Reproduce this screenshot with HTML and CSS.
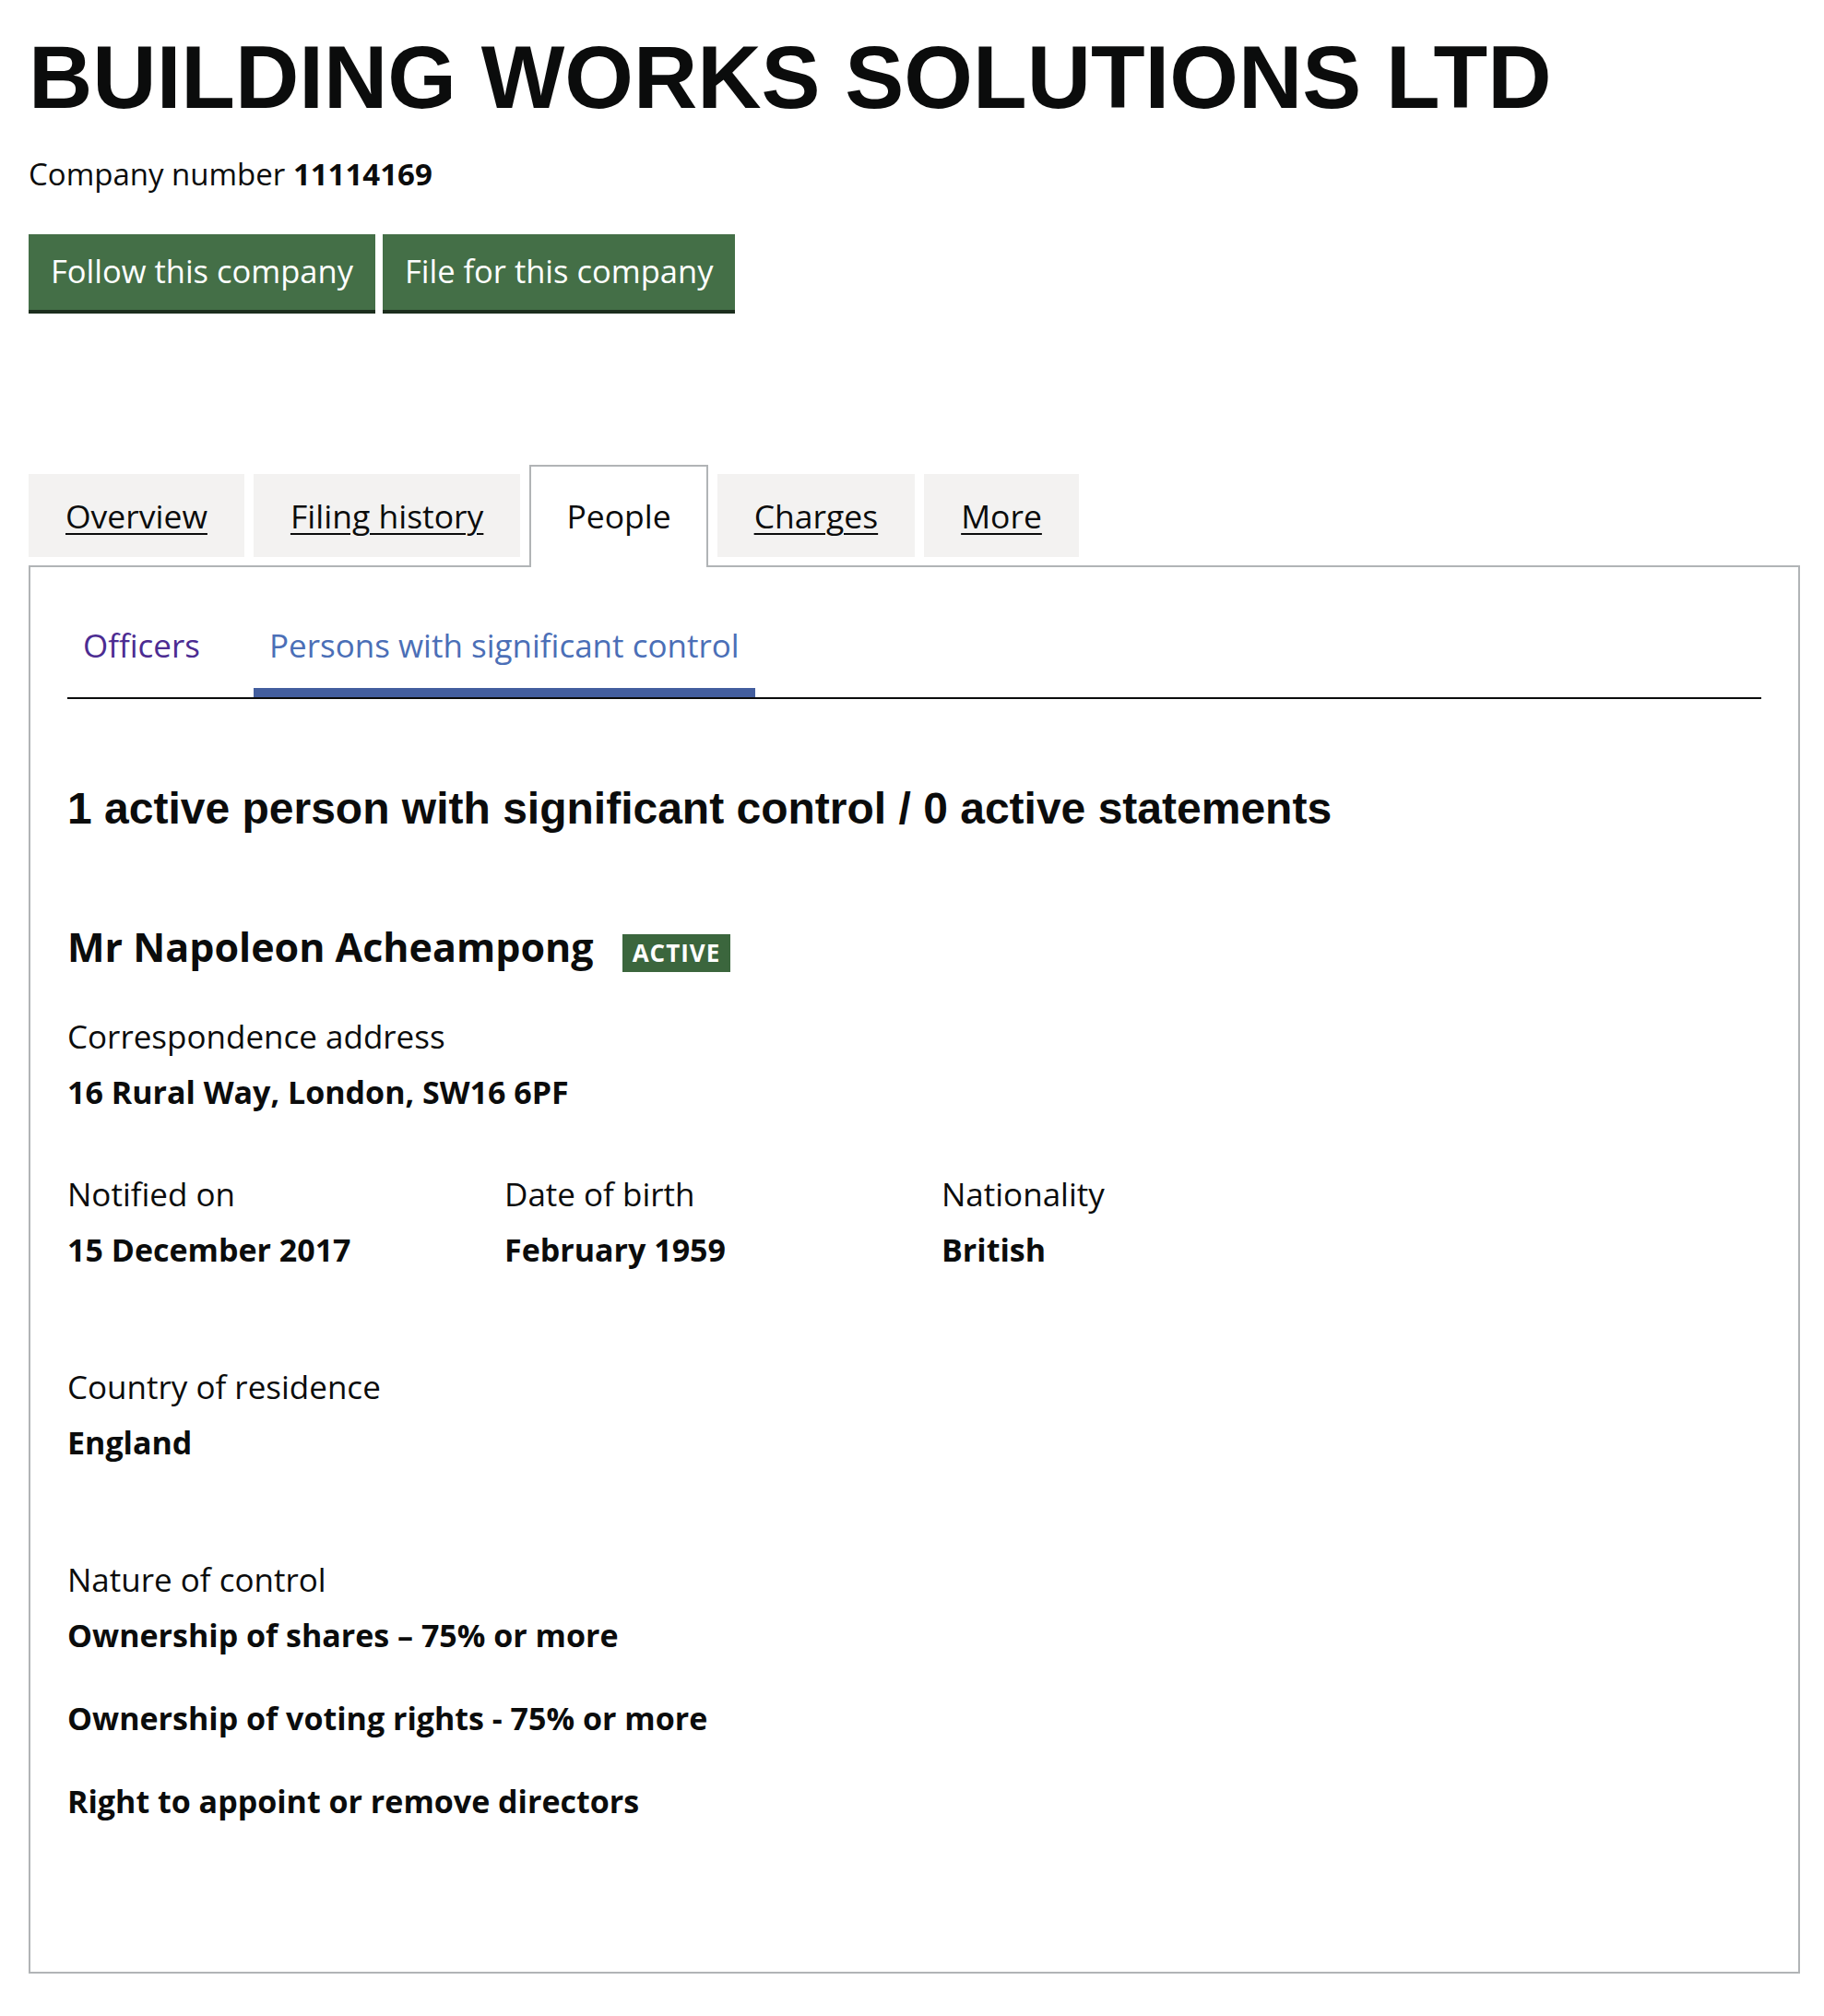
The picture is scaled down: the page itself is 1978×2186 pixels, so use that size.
FILE: index.html
```html
<!DOCTYPE html>
<html lang="en">
<head>
  <meta charset="UTF-8" />
  <meta name="viewport" content="width=device-width, initial-scale=1.0"/>
  <title>BUILDING WORKS SOLUTIONS LTD - People</title>
  <link rel="stylesheet" href="styles.css">
</head>
<body>

  <div class="page">
    <!-- Company header -->
    <h1 class="company-name">BUILDING WORKS SOLUTIONS LTD</h1>
    <p class="company-number">Company number <strong>11114169</strong></p>

    <div class="actions">
      <a href="#" class="btn">Follow this company</a>
      <a href="#" class="btn">File for this company</a>
    </div>

    <!-- Main tabs -->
    <ul class="tabs">
      <li class="tab"><a href="#">Overview</a></li>
      <li class="tab"><a href="#">Filing history</a></li>
      <li class="tab tab-active"><span>People</span></li>
      <li class="tab"><a href="#">Charges</a></li>
      <li class="tab"><a href="#">More</a></li>
    </ul>

    <div class="panel">
      <!-- People sub navigation -->
      <ul class="subnav">
        <li class="subnav-item"><a href="#">Officers</a></li>
        <li class="subnav-item subnav-active"><a href="#">Persons with significant control</a></li>
      </ul>

      <h2 class="psc-heading">1 active person with significant control / 0 active statements</h2>

      <div class="person">
        <div class="person-title">
          <h3 class="person-name">Mr Napoleon Acheampong</h3>
          <span class="tag">Active</span>
        </div>

        <dl class="field">
          <dt>Correspondence address</dt>
          <dd>16 Rural Way, London, SW16 6PF</dd>
        </dl>

        <div class="field-row">
          <dl>
            <dt>Notified on</dt>
            <dd>15 December 2017</dd>
          </dl>
          <dl>
            <dt>Date of birth</dt>
            <dd>February 1959</dd>
          </dl>
          <dl>
            <dt>Nationality</dt>
            <dd>British</dd>
          </dl>
        </div>

        <dl class="field field-spaced">
          <dt>Country of residence</dt>
          <dd>England</dd>
        </dl>

        <dl class="field field-spaced">
          <dt>Nature of control</dt>
          <dd>Ownership of shares – 75% or more</dd>
          <dd class="control">Ownership of voting rights - 75% or more</dd>
          <dd class="control">Right to appoint or remove directors</dd>
        </dl>
      </div>
    </div>
  </div>

</body>
</html>
```

FILE: styles.css
```css
body {
  margin: 0;
  font-family: "Open Sans", "Noto Sans", sans-serif;
  font-size: 35px;
  line-height: 50px;
  color: #0b0c0c;
  background: #fff;
}

.page {
  padding: 34px 26px 0 31px;
}

.company-name {
  margin: 0;
  font-family: "Liberation Sans", Arial, sans-serif;
  font-size: 96px;
  line-height: 100px;
  font-weight: 700;
}

.company-number {
  margin: 30px 0 0;
  font-size: 33px;
}

.company-number strong {
  font-weight: 700;
}

.actions {
  display: flex;
  gap: 8px;
  margin-top: 40px;
}

.btn {
  display: inline-block;
  padding: 18px 24px 20px;
  font-size: 34.5px;
  line-height: 44px;
  background: #446f47;
  color: #fff;
  text-decoration: none;
  box-shadow: 0 4px 0 #1c2e1d;
}

/* main tabs */
.tabs {
  display: flex;
  align-items: flex-start;
  list-style: none;
  margin: 178px 0 0;
  padding: 0;
  font-size: 35.5px;
}

.tab {
  margin-right: 10px;
  padding: 20px 40px;
  background: #f3f2f1;
}

.tab a {
  color: #0b0c0c;
  text-decoration: underline;
  text-decoration-thickness: 2px;
  text-underline-offset: 5px;
}

.tab-active {
  position: relative;
  z-index: 1;
  margin-top: -10px;
  margin-bottom: -2px;
  padding: 28px 38px 31px;
  border: 2px solid #b1b4b6;
  border-bottom: 0;
  background: #fff;
}

.panel {
  border: 2px solid #b1b4b6;
  padding: 60px 40px 160px;
}

/* sub navigation */
.subnav {
  display: flex;
  list-style: none;
  margin: 0;
  padding: 0;
  border-bottom: 2px solid #0b0c0c;
}

.subnav-item {
  margin-right: 41px;
  padding: 0 17px 21px;
  border-bottom: 10px solid transparent;
}

.subnav-item a {
  color: #4c2c92;
  text-decoration: none;
}

.subnav-active {
  border-bottom-color: #435e9e;
}

.subnav-active a {
  color: #4b6fb7;
}

.psc-heading {
  margin: 94px 0 0;
  font-family: "Liberation Sans", Arial, sans-serif;
  font-size: 48px;
  line-height: 50px;
  font-weight: 700;
}

/* person */
.person-title {
  display: flex;
  align-items: baseline;
  margin-top: 100px;
}

.person-name {
  margin: 0;
  font-size: 43px;
  line-height: 50px;
  font-weight: 700;
}

.tag {
  margin-left: 31px;
  padding: 6px 11px;
  font-size: 26px;
  line-height: 29px;
  font-weight: 700;
  letter-spacing: 1px;
  text-transform: uppercase;
  background: #3b663d;
  color: #fff;
}

dl {
  margin: 0;
}

dd {
  margin: 10px 0 0;
  font-size: 34px;
  font-weight: 700;
}

.field {
  margin-top: 45px;
}

.field-spaced {
  margin-top: 99px;
}

.field-row {
  display: grid;
  grid-template-columns: repeat(3, 474px);
  margin-top: 61px;
}

.control {
  margin-top: 40px;
}
```
